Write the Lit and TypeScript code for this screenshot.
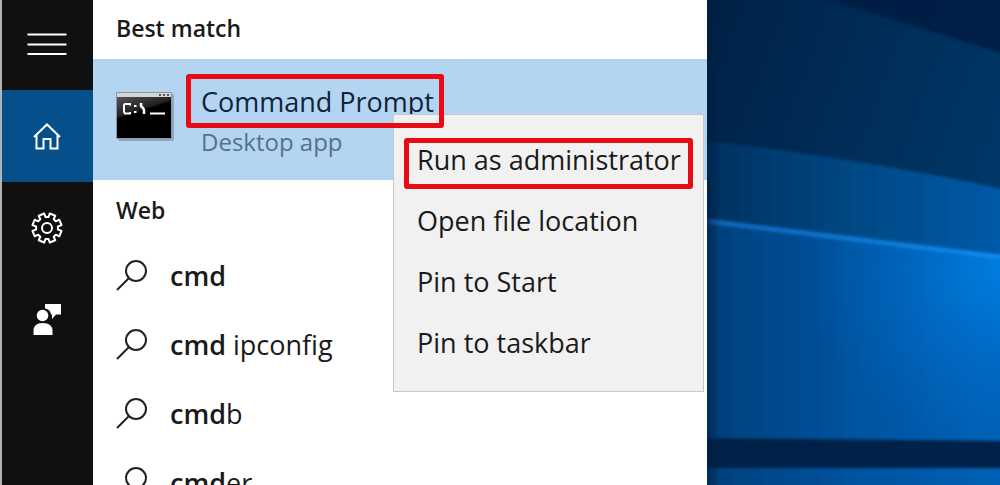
import { LitElement, html, css, svg } from "lit";
import { customElement, state } from "lit/decorators.js";

interface Suggestion {
  typed: string;
  rest: string;
}

const gearPath = (() => {
  const teeth = 8;
  const pts: string[] = [];
  for (let i = 0; i < teeth; i++) {
    const base = ((i + 0.5) * 2 * Math.PI) / teeth;
    const steps: [number, number][] = [
      [-0.26, 11],
      [-0.2, 14.8],
      [0.2, 14.8],
      [0.26, 11],
    ];
    for (const [a, r] of steps) {
      pts.push(`${(16 + r * Math.cos(base + a)).toFixed(2)} ${(16 + r * Math.sin(base + a)).toFixed(2)}`);
    }
  }
  return `M${pts.join("L")}Z`;
})();

const icons = {
  menu: svg`<path d="M-3.5 5.5H35.5M-3.5 15.5H35.5M-3.5 25H35.5" />`,
  home: svg`<path d="M3 17 16 4.500 29 17M5.500 15V28.500H12.500V19H19.500V28.500H26.500V15" />`,
  gear: svg`<path d=${gearPath} stroke-linejoin="round" /><circle cx="16" cy="16" r="5" />`,
  feedback: svg`<g fill="currentColor" stroke="none">
    <path d="M14 0H30V10.500H25L21 15V10.500H20A7 7 0 0 0 14 4.500Z" />
    <circle cx="11.500" cy="11.500" r="5.800" />
    <path d="M2.500 31V27Q2.500 19 11.500 19 21.500 19 21.500 27V31Z" /></g>`,
};

@customElement("app-root")
export class AppRoot extends LitElement {
  static styles = css`
    :host {
      display: block;
      height: 100vh;
      min-height: 400px;
      overflow: hidden;
      font-family: "Open Sans", "Noto Sans", sans-serif;
      color: #1a1a1a;
    }
    button {
      font: inherit;
      color: inherit;
      background: none;
      border: 0;
      margin: 0;
      padding: 0;
      text-align: left;
    }
    .screen {
      display: grid;
      grid-template-columns: 93px minmax(480px, 614px) minmax(0, 1fr);
      grid-template-rows: minmax(0, 1fr);
      height: 100%;
      background: #00254c;
    }
    .rail {
      display: flex;
      flex-direction: column;
      background: #101010;
      border-left: 2px solid #b4b4b4;
    }
    .rail button {
      display: grid;
      place-items: center;
      height: 92px;
      padding-right: 1px;
      color: #fff;
    }
    .rail button:first-child {
      height: 90px;
    }
    .rail .current {
      background: #054f8a;
    }
    .rail svg {
      width: 32px;
      height: 32px;
      overflow: visible;
      fill: none;
      stroke: currentColor;
      stroke-width: 2;
    }
    .results {
      position: relative;
      background: #fff;
    }
    .list {
      height: 100%;
      overflow: hidden;
    }
    h2 {
      margin: 0;
      padding: 0 23px 2px;
      font-size: 23px;
      font-weight: 600;
      line-height: 57px;
    }
    .best + h2 {
      padding-top: 2px;
    }
    .best {
      display: flex;
      align-items: center;
      gap: 27px;
      width: 100%;
      height: 121px;
      padding: 4px 23px 0;
      background: #b3d5f1;
    }
    .best svg {
      width: 58px;
      height: 50px;
      flex: none;
      margin-bottom: 12px;
    }
    .labels {
      display: flex;
      flex-direction: column;
      align-items: flex-start;
    }
    .title {
      position: relative;
      font-size: 27px;
      line-height: 40px;
      color: #10233c;
    }
    .kind {
      font-size: 24px;
      line-height: 40px;
      color: #5a7086;
    }
    .marked::after {
      content: "";
      position: absolute;
      z-index: 3;
      border: 5px solid #e80b16;
      border-radius: 3px;
      inset: -8px -10px -6px -15px;
      pointer-events: none;
    }
    .suggestion {
      display: flex;
      align-items: center;
      gap: 22px;
      width: 100%;
      height: 69px;
      padding: 0 23px;
      font-size: 27px;
    }
    .suggestion svg {
      width: 32px;
      height: 32px;
      flex: none;
      fill: none;
      stroke: #222;
      stroke-width: 2;
    }
    .suggestion b {
      font-weight: 600;
    }
    .menu {
      position: absolute;
      z-index: 2;
      top: 114px;
      right: 3px;
      display: flex;
      flex-direction: column;
      box-sizing: border-box;
      width: 311px;
      padding: 14px 0 18px;
      background: #f1f1f1;
      border: 1px solid #c8c8c8;
    }
    .menu button {
      padding: 0 23px;
      font-size: 27px;
      line-height: 61px;
      white-space: nowrap;
    }
    .menu .marked {
      position: relative;
    }
    .menu .marked::after {
      inset: 9px 10px 1px 10px;
    }
    .wallpaper {
      display: block;
      width: 100%;
      height: 100%;
      min-height: 0;
    }
  `;

  @state() private menuOpen = true;

  private suggestions: Suggestion[] = [
    { typed: "cmd", rest: "" },
    { typed: "cmd", rest: " ipconfig" },
    { typed: "cmd", rest: "b" },
    { typed: "cmd", rest: "er" },
  ];

  private actions = ["Run as administrator", "Open file location", "Pin to Start", "Pin to taskbar"];

  private railButton(label: string, icon: unknown, current = false) {
    return html`<button class=${current ? "current" : ""} aria-label=${label}>
      <svg viewBox="0 0 32 32" aria-hidden="true">${icon}</svg>
    </button>`;
  }

  private consoleIcon() {
    return html`<svg viewBox="0 0 58 50" aria-hidden="true">
      <defs>
        <linearGradient id="gloss" x1="0" y1="0" x2="0.6" y2="1">
          <stop offset="0" stop-color="#555" />
          <stop offset="0.5" stop-color="#202020" />
          <stop offset="0.55" stop-color="#000" />
        </linearGradient>
      </defs>
      <rect x="2" y="3" width="56" height="47" rx="2" fill="#6f8ca6" opacity="0.6" />
      <rect x="0" y="1" width="56" height="47" rx="1" fill="#8f979d" />
      <rect x="1" y="2" width="54" height="4" fill="#d3d6d8" />
      <path d="M43 4h2M47 4h2M51 4h2" stroke="#555" stroke-width="2" />
      <rect x="1" y="6" width="54" height="41" fill="#000" />
      <path d="M1 6H55V14Q22 16 6 31L1 36Z" fill="url(#gloss)" />
      <g fill="none" stroke="#fff" stroke-width="2">
        <path d="M14 14.500V13H9L8 14V21L9 22.500H14V21" />
        <path d="M18 15h2.500M18 21h2.500" />
        <path d="M25 12V15L27 17L28 19V23" stroke-width="2.500" />
        <path d="M34 22.500H49" />
      </g>
    </svg>`;
  }

  private wallpaper() {
    return html`<svg class="wallpaper" viewBox="0 0 293 485" preserveAspectRatio="none" aria-hidden="true">
      <defs>
        <linearGradient id="sky" x1="0" y1="0" x2="1" y2="0.6">
          <stop offset="0" stop-color="#002145" />
          <stop offset="1" stop-color="#003a6c" />
        </linearGradient>
        <linearGradient id="beam" x1="0" y1="0" x2="1" y2="0">
          <stop offset="0" stop-color="#00305e" />
          <stop offset="0.5" stop-color="#004884" />
          <stop offset="1" stop-color="#005cac" />
        </linearGradient>
        <linearGradient id="floor" x1="0" y1="0" x2="1" y2="0">
          <stop offset="0" stop-color="#003f78" />
          <stop offset="0.5" stop-color="#0053a0" />
          <stop offset="1" stop-color="#0062b8" />
        </linearGradient>
        <radialGradient id="glow" gradientUnits="userSpaceOnUse" cx="293" cy="270" r="190">
          <stop offset="0" stop-color="#0080e4" stop-opacity="0.9" />
          <stop offset="1" stop-color="#0068c4" stop-opacity="0" />
        </radialGradient>
        <linearGradient id="ray" x1="0" y1="0" x2="1" y2="0">
          <stop offset="0" stop-color="#1263b4" />
          <stop offset="1" stop-color="#0a8bf5" />
        </linearGradient>
        <linearGradient id="edge" x1="0" y1="0" x2="1" y2="0">
          <stop offset="0" stop-color="#001c3c" stop-opacity="0.6" />
          <stop offset="1" stop-color="#001c3c" stop-opacity="0" />
        </linearGradient>
        <filter id="soft" x="-10%" y="-50%" width="120%" height="200%">
          <feGaussianBlur stdDeviation="1.500" />
        </filter>
      </defs>
      <rect width="293" height="485" fill="url(#sky)" />
      <path d="M90-10 310 58V-10Z" fill="#001f42" opacity="0.85" filter="url(#soft)" />
      <path d="M-10 140Q150 157 310 192V300H-10Z" fill="url(#beam)" filter="url(#soft)" />
      <path d="M-10 220 310 259V500H-10Z" fill="url(#floor)" filter="url(#soft)" />
      <path d="M-10 220 310 259V440H-10Z" fill="url(#glow)" />
      <path d="M-10 220 310 259" stroke="url(#ray)" stroke-width="5" filter="url(#soft)" />
      <path d="M-10 438 310 441V468H-10Z" fill="#002448" filter="url(#soft)" />
      <rect width="14" height="485" fill="url(#edge)" />
    </svg>`;
  }

  render() {
    return html`<div class="screen">
      <nav class="rail" aria-label="Start">
        ${this.railButton("Menu", icons.menu)}
        ${this.railButton("Home", icons.home, true)}
        ${this.railButton("Settings", icons.gear)}
        ${this.railButton("Feedback", icons.feedback)}
      </nav>
      <main class="results">
        <div class="list">
          <h2>Best match</h2>
          <button class="best" @contextmenu=${this.toggleMenu}>
            ${this.consoleIcon()}
            <span class="labels">
              <span class="title marked">Command Prompt</span>
              <span class="kind">Desktop app</span>
            </span>
          </button>
          <h2>Web</h2>
          ${this.suggestions.map(
            (s) => html`<button class="suggestion">
              <svg viewBox="0 0 32 32" aria-hidden="true">
                <circle cx="20" cy="11" r="10" />
                <path d="M13 18 1 30" />
              </svg>
              <span><b>${s.typed}</b>${s.rest}</span>
            </button>`
          )}
        </div>
        ${this.menuOpen
          ? html`<div class="menu" role="menu">
              ${this.actions.map(
                (a, i) => html`<button role="menuitem" class=${i === 0 ? "marked" : ""}>${a}</button>`
              )}
            </div>`
          : null}
      </main>
      ${this.wallpaper()}
    </div>`;
  }

  private toggleMenu(e: Event) {
    e.preventDefault();
    this.menuOpen = !this.menuOpen;
  }
}
